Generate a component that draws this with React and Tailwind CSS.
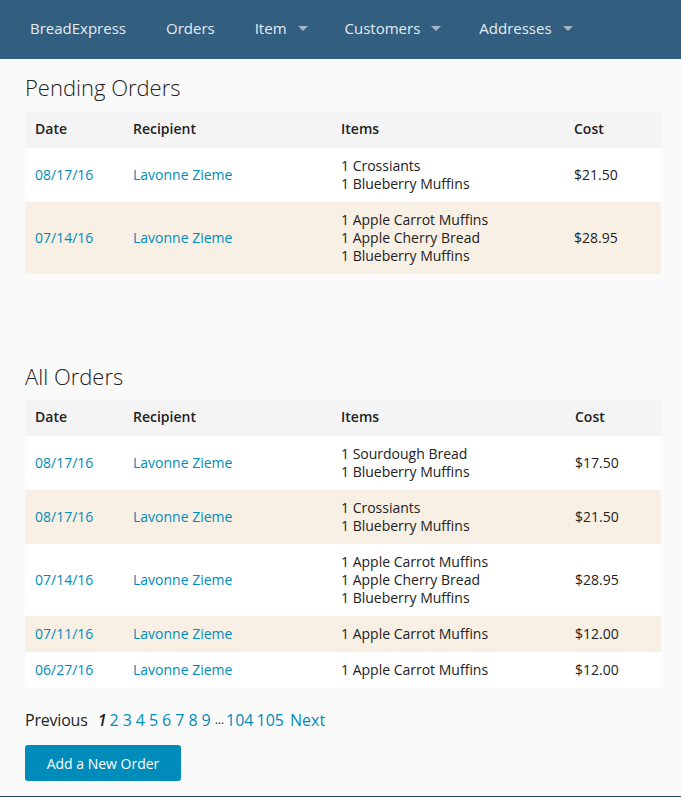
import React from 'react'

const pending = [
  { date: '08/17/16', name: 'Lavonne Zieme', items: ['1 Crossiants', '1 Blueberry Muffins'], cost: '$21.50' },
  { date: '07/14/16', name: 'Lavonne Zieme', items: ['1 Apple Carrot Muffins', '1 Apple Cherry Bread', '1 Blueberry Muffins'], cost: '$28.95' },
]

const all = [
  { date: '08/17/16', name: 'Lavonne Zieme', items: ['1 Sourdough Bread', '1 Blueberry Muffins'], cost: '$17.50' },
  { date: '08/17/16', name: 'Lavonne Zieme', items: ['1 Crossiants', '1 Blueberry Muffins'], cost: '$21.50' },
  { date: '07/14/16', name: 'Lavonne Zieme', items: ['1 Apple Carrot Muffins', '1 Apple Cherry Bread', '1 Blueberry Muffins'], cost: '$28.95' },
  { date: '07/11/16', name: 'Lavonne Zieme', items: ['1 Apple Carrot Muffins'], cost: '$12.00' },
  { date: '06/27/16', name: 'Lavonne Zieme', items: ['1 Apple Carrot Muffins'], cost: '$12.00' },
]

function Caret() {
  return <span className="ml-[11px] inline-block h-0 w-0 border-x-[5px] border-t-[5px] border-x-transparent border-t-[#a3b5c6] align-middle" />
}

function OrdersTable({ rows, costCol }) {
  return (
    <table className="w-[636px] border-collapse text-[14px] leading-[18px] text-[#222]">
      <thead className="bg-[#f4f4f4]">
        <tr className="font-semibold">
          <td className="w-[98px] px-[10px] pt-[8px] pb-[10px]">Date</td>
          <td className="w-[208px] px-[10px] pt-[8px] pb-[10px]">Recipient</td>
          <td className={`${costCol === 'wide' ? 'w-[234px]' : 'w-[233px]'} px-[10px] pt-[8px] pb-[10px]`}>Items</td>
          <td className="px-[10px] pt-[8px] pb-[10px]">Cost</td>
        </tr>
      </thead>
      <tbody>
        {rows.map((r, i) => (
          <tr key={i} className={i % 2 ? 'bg-[#f8f0e4]' : 'bg-white'}>
            <td className="px-[10px] py-[9px] text-[#008cba]">{r.date}</td>
            <td className="px-[10px] py-[9px] text-[#008cba]">{r.name}</td>
            <td className="px-[10px] py-[9px]">
              {r.items.map((it) => (
                <div key={it}>{it}</div>
              ))}
            </td>
            <td className="px-[10px] py-[9px]">{r.cost}</td>
          </tr>
        ))}
      </tbody>
    </table>
  )
}

export default function App() {
  return (
    <div className="min-h-[798px] bg-[#fafafa] font-['Open_Sans',sans-serif]">
      {/* top bar */}
      <nav className="flex h-[59px] items-center bg-[#325e80] px-[10px] pb-[2px] text-[15px] text-[#e4ebf1]">
        <span className="px-[20px]">BreadExpress</span>
        <span className="px-[20px]">Orders</span>
        <span className="flex items-center px-[20px]">Item<Caret /></span>
        <span className="flex items-center pl-[17px] pr-[20px]">Customers<Caret /></span>
        <span className="flex items-center pl-[18px] pr-[20px]">Addresses<Caret /></span>
      </nav>

      <main className="pl-[25px] pr-[20px]">
        <h3 className="mt-[14px] mb-[11px] text-[22px] leading-[28px] font-light text-[#222]">Pending Orders</h3>
        <OrdersTable rows={pending} />

        <h3 className="mt-[88px] mb-[10px] text-[22px] leading-[28px] font-light text-[#222]">All Orders</h3>
        <OrdersTable rows={all} costCol="wide" />

        <div className="mt-[21px] flex items-center text-[16px] leading-[22px] text-[#008cba]">
          <span className="mr-[10px] tracking-[-0.2px] text-[#222]">Previous</span>
          <span className="mr-[3px] italic font-semibold text-[#222]">1</span>
          {['2', '3', '4', '5', '6', '7', '8', '9'].map((n) => (
            <span key={n} className="mr-[4px]">{n}</span>
          ))}
          <span className="mr-[2px] text-[12px] text-[#222]">…</span>
          <span className="mr-[3px]">104</span>
          <span className="mr-[6px]">105</span>
          <span>Next</span>
        </div>

        <button className="mt-[14px] h-[36px] w-[156px] rounded-[3px] bg-[#008cba] text-[14px] text-white">
          Add a New Order
        </button>
      </main>

      <footer className="mt-[15px] h-[1px] bg-[#2d4a63]" />
    </div>
  )
}
